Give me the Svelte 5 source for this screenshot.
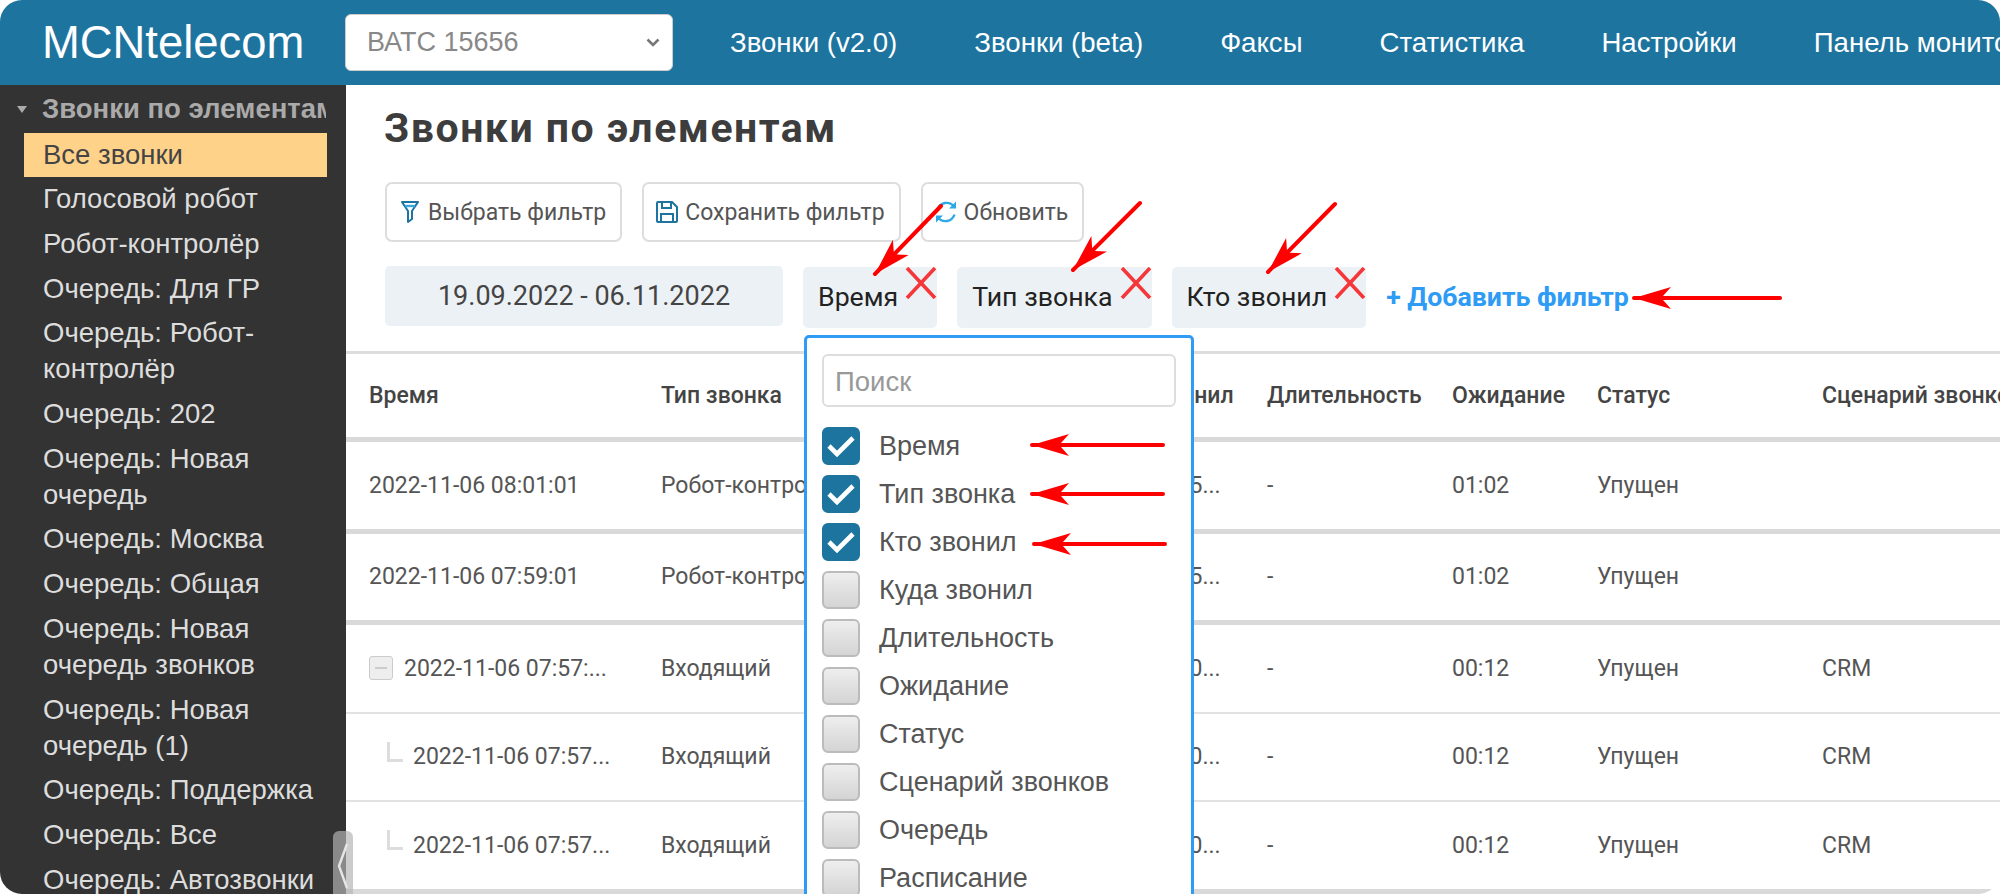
<script>
	const navItems = ['Звонки (v2.0)', 'Звонки (beta)', 'Факсы', 'Статистика', 'Настройки', 'Панель мониторинга'];

	const sideItems = [
		'Голосовой робот',
		'Робот-контролёр',
		'Очередь: Для ГР',
		'Очередь: Робот-контролёр',
		'Очередь: 202',
		'Очередь: Новая очередь',
		'Очередь: Москва',
		'Очередь: Общая',
		'Очередь: Новая очередь звонков',
		'Очередь: Новая очередь (1)',
		'Очередь: Поддержка',
		'Очередь: Все',
		'Очередь: Автозвонки'
	];

	const columns = ['Время', 'Тип звонка', 'Кто звонил', 'Куда звонил', 'Длительность', 'Ожидание', 'Статус', 'Сценарий звонков'];

	const rows = [
		{ time: '2022-11-06 08:01:01', type: 'Робот-контролёр', to: '74991105...', wait: '01:02', script: '', thick: true },
		{ time: '2022-11-06 07:59:01', type: 'Робот-контролёр', to: '74991105...', wait: '01:02', script: '', thick: true },
		{ time: '2022-11-06 07:57:...', type: 'Входящий', to: '74991100...', wait: '00:12', script: 'CRM', parent: true },
		{ time: '2022-11-06 07:57...', type: 'Входящий', to: '74991100...', wait: '00:12', script: 'CRM', child: true },
		{ time: '2022-11-06 07:57...', type: 'Входящий', to: '74991100...', wait: '00:12', script: 'CRM', child: true, thick: true }
	];

	const filterOptions = [
		{ label: 'Время', checked: true },
		{ label: 'Тип звонка', checked: true },
		{ label: 'Кто звонил', checked: true },
		{ label: 'Куда звонил' },
		{ label: 'Длительность' },
		{ label: 'Ожидание' },
		{ label: 'Статус' },
		{ label: 'Сценарий звонков' },
		{ label: 'Очередь' },
		{ label: 'Расписание' }
	];

	const chips = ['Время', 'Тип звонка', 'Кто звонил'];

	// annotation arrows, [tipX, tipY, tailX, tailY]
	const arrows = [
		[875, 274, 941, 206],
		[1073, 270, 1140, 203],
		[1268, 272, 1335, 204],
		[1634, 298, 1780, 298],
		[1032, 445, 1163, 445],
		[1032, 494, 1163, 494],
		[1034, 544, 1165, 544]
	];

	function headPoints(a) {
		const [x, y, tx, ty] = a;
		const len = Math.hypot(tx - x, ty - y);
		const ux = (tx - x) / len;
		const uy = (ty - y) / len;
		const px = -uy;
		const py = ux;
		const pt = (along, side) => `${x + ux * along + px * side},${y + uy * along + py * side}`;
		return [pt(0, 0), pt(37, 11), pt(29, 2), pt(29, -2), pt(37, -11)].join(' ');
	}
</script>

<div class="frame">
	<header class="topbar">
		<div class="logo">MCNtelecom</div>
		<div class="account">
			<span>ВАТС 15656</span>
			<svg width="14" height="9" viewBox="0 0 14 9"><path d="M1.5 1.5 7 7l5.5-5.5" fill="none" stroke="#777" stroke-width="2.6" /></svg>
		</div>
		<nav class="nav">
			{#each navItems as item}
				<span>{item}</span>
			{/each}
		</nav>
	</header>

	<div class="body">
		<aside class="sidebar">
			<div class="side-head"><span class="tri"></span><span class="side-title">Звонки по элементам</span></div>
			<div class="side-item active">Все звонки</div>
			{#each sideItems as item}
				<div class="side-item">{item}</div>
			{/each}
		</aside>

		<main class="content">
			<h1>Звонки по элементам</h1>

			<div class="toolbar">
				<button>
					<svg viewBox="0 0 24 24"><path d="M4 2h16l-6 9v8l-4 3V11z" fill="none" stroke="#1d749f" stroke-width="2" stroke-linejoin="round" /><path d="M7 6h10" stroke="#3ba6dc" stroke-width="2.4" /></svg>
					Выбрать фильтр
				</button>
				<button>
					<svg viewBox="0 0 24 24"><path d="M2 3a1 1 0 0 1 1-1h14l5 5v14a1 1 0 0 1-1 1H3a1 1 0 0 1-1-1z" fill="none" stroke="#1d749f" stroke-width="2" /><path d="M7 2v6h9V2M6 22v-8h12v8" fill="none" stroke="#1d749f" stroke-width="2" /></svg>
					Сохранить фильтр
				</button>
				<button>
					<svg viewBox="0 0 24 24"><path d="M20 6.500A9.500 9.500 0 0 0 3.500 9.500" fill="none" stroke="#2ea8e6" stroke-width="2.4" /><path d="M4 17.500a9.500 9.500 0 0 0 16.500-3" fill="none" stroke="#2ea8e6" stroke-width="2.4" /><path d="M22 1.500v7h-7zM2 22.500v-7h7z" fill="#2ea8e6" /></svg>
					Обновить
				</button>
			</div>

			<div class="filters">
				<div class="date">19.09.2022 - 06.11.2022</div>
				{#each chips as chip}
					<div class="chip">
						{chip}
						<svg class="close" width="32" height="32" viewBox="0 0 32 32"><path d="M2 1l28 30M30 1 2 31" stroke="#f5373a" stroke-width="3.6" /></svg>
					</div>
				{/each}
				<span class="add">+ Добавить фильтр</span>
			</div>

			<table class="calls">
				<colgroup>
					<col style="width:292px" /><col style="width:244px" /><col style="width:194px" /><col style="width:168px" /><col style="width:185px" /><col style="width:145px" /><col style="width:225px" /><col style="width:320px" />
				</colgroup>
				<thead>
					<tr class="thick">
						{#each columns as col}
							<th>{col}</th>
						{/each}
					</tr>
				</thead>
				<tbody>
					{#each rows as row}
						<tr class:thick={row.thick}>
							<td>
								<div class="time">
									{#if row.parent}<span class="toggle"></span>{/if}
									{#if row.child}<span class="branch"></span>{/if}
									{row.time}
								</div>
							</td>
							<td>{row.type}</td>
							<td></td>
							<td>{row.to}</td>
							<td>-</td>
							<td>{row.wait}</td>
							<td>Упущен</td>
							<td>{row.script}</td>
						</tr>
					{/each}
				</tbody>
			</table>

			<div class="dropdown">
				<div class="search">Поиск</div>
				{#each filterOptions as opt}
					<div class="option">
						<span class="box" class:checked={opt.checked}>
							{#if opt.checked}
								<svg width="28" height="24" viewBox="0 0 28 24"><path d="M2 12l8 8L26 4" fill="none" stroke="#fff" stroke-width="4.6" /></svg>
							{/if}
						</span>
						{opt.label}
					</div>
				{/each}
			</div>
		</main>
	</div>

	<div class="handle">
		<svg width="12" height="48" viewBox="0 0 12 48"><path d="M10 2 2 24l8 22" fill="none" stroke="#e6e6e6" stroke-width="2.4" /></svg>
	</div>

	<svg class="marks" width="2000" height="894" viewBox="0 0 2000 894">
		{#each arrows as a}
			<line x1={a[0]} y1={a[1]} x2={a[2]} y2={a[3]} stroke="#f00" stroke-width="4" stroke-linecap="round" />
			<polygon points={headPoints(a)} fill="#f00" />
		{/each}
	</svg>
</div>

<style>
	:global(body) {
		margin: 0;
		background: #fff;
	}

	.frame {
		position: relative;
		width: 2000px;
		height: 894px;
		overflow: hidden;
		border-radius: 22px;
		background: #fff;
		font-family: 'Liberation Sans', Arial, sans-serif;
	}

	.topbar {
		display: flex;
		align-items: center;
		height: 85px;
		background: #1d749f;
		color: #fff;
	}

	.logo {
		flex: none;
		width: 302px;
		padding-left: 42px;
		box-sizing: border-box;
		font-size: 45.4px;
		white-space: nowrap;
	}

	.account {
		flex: none;
		display: flex;
		align-items: center;
		justify-content: space-between;
		box-sizing: border-box;
		width: 328px;
		height: 57px;
		margin-left: 43px;
		padding: 0 12px 0 21px;
		background: #fff;
		border: 1px solid #ccc;
		border-radius: 6px;
		color: #888;
		font-size: 27px;
	}

	.nav {
		display: flex;
		gap: 77px;
		margin-left: 57px;
		font-size: 27.6px;
		white-space: nowrap;
	}

	.body {
		display: flex;
		height: 809px;
	}

	.sidebar {
		flex: none;
		width: 346px;
		box-sizing: border-box;
		padding: 0 19px 0 0;
		background: #333;
		color: #ddd;
		font-size: 27.5px;
		overflow: hidden;
	}

	.side-head {
		display: flex;
		align-items: center;
		height: 48px;
		padding-left: 17px;
		color: #aaa;
		font-weight: bold;
	}

	.tri {
		flex: none;
		width: 0;
		height: 0;
		margin-right: 15px;
		border-left: 5px solid transparent;
		border-right: 5px solid transparent;
		border-top: 7px solid #aaa;
	}

	.side-title {
		flex: none;
		width: 284px;
		overflow: hidden;
		white-space: nowrap;
	}

	.side-item {
		margin-left: 24px;
		padding: 4.35px 0 4.35px 19px;
		line-height: 36px;
	}

	.side-item.active {
		padding-top: 4px;
		padding-bottom: 4px;
		background: #ffd28a;
		color: #444;
	}

	.content {
		position: relative;
		flex: 1;
		min-width: 0;
		overflow: hidden;
	}

	h1 {
		margin: 0;
		padding: 20px 0 0 38px;
		height: 77px;
		box-sizing: border-box;
		color: #3d3d3d;
		font-family: Roboto, sans-serif;
		font-size: 41px;
		font-weight: 700;
		line-height: 46px;
		letter-spacing: 1.5px;
		white-space: nowrap;
	}

	.toolbar {
		display: flex;
		gap: 20px;
		padding: 20px 0 0 39px;
	}

	button {
		display: flex;
		align-items: center;
		gap: 6px;
		height: 60px;
		padding: 0 14px 0 11px;
		background: #fff;
		border: 2px solid #ddd;
		border-radius: 7px;
		color: #555;
		font-family: Roboto, sans-serif;
		font-size: 23px;
		white-space: nowrap;
	}

	button svg {
		flex: none;
		width: 24px;
		height: 24px;
	}

	.filters {
		display: flex;
		align-items: flex-start;
		gap: 20px;
		padding: 24px 0 0 39px;
	}

	.date {
		width: 398px;
		height: 60px;
		line-height: 60px;
		text-align: center;
		background: #ecf1f5;
		border-radius: 5px;
		color: #444;
		font-family: Roboto, sans-serif;
		font-size: 27px;
	}

	.chip {
		position: relative;
		height: 61px;
		margin-top: 1px;
		padding: 0 39px 0 15px;
		line-height: 61px;
		background: #ecf1f5;
		border-radius: 5px;
		color: #222;
		font-family: Roboto, sans-serif;
		font-size: 26.7px;
		white-space: nowrap;
	}

	.close {
		position: absolute;
		top: 0;
		right: 0;
	}

	.add {
		align-self: center;
		color: #2e9bf5;
		font-family: Roboto, sans-serif;
		font-size: 26.7px;
		font-weight: 700;
		white-space: nowrap;
	}

	.calls {
		table-layout: fixed;
		width: 1573px;
		margin-top: 23px;
		border-collapse: collapse;
		border-top: 3px solid #ddd;
		font-family: Roboto, sans-serif;
		font-size: 23px;
		color: #555;
	}

	th {
		height: 83px;
		padding: 0 0 0 23px;
		text-align: left;
		font-weight: 500;
		color: #444;
		white-space: nowrap;
		overflow: hidden;
	}

	td {
		height: 86.5px;
		padding: 0 0 0 23px;
		white-space: nowrap;
		overflow: hidden;
	}

	tr {
		border-bottom: 2px solid #e2e2e2;
	}

	tr.thick {
		border-bottom: 5px solid #d9d9d9;
	}

	.time {
		display: flex;
		align-items: center;
	}

	.toggle {
		position: relative;
		width: 24px;
		height: 24px;
		margin-right: 11px;
		box-sizing: border-box;
		background: #eee;
		border: 1px solid #ccc;
		border-radius: 3px;
	}

	.toggle::after {
		content: '';
		position: absolute;
		left: 5px;
		right: 5px;
		top: 10px;
		height: 2px;
		background: #ccc;
	}

	.branch {
		width: 16px;
		height: 20px;
		margin: -10px 10px 0 18px;
		border-left: 3px solid #ddd;
		border-bottom: 3px solid #ddd;
		box-sizing: border-box;
	}

	.dropdown {
		position: absolute;
		top: 250px;
		left: 458px;
		box-sizing: border-box;
		width: 390px;
		height: 600px;
		padding: 16px 15px 0;
		background: #fff;
		border: 3px solid #2e9bf5;
		border-radius: 5px;
	}

	.search {
		box-sizing: border-box;
		height: 53px;
		margin-bottom: 15px;
		padding-left: 11px;
		line-height: 51px;
		background: #fff;
		border: 2px solid #ddd;
		border-radius: 6px;
		color: #999;
		font-size: 27.5px;
	}

	.option {
		display: flex;
		align-items: center;
		gap: 19px;
		height: 48px;
		color: #555;
		font-size: 27px;
	}

	.box {
		display: flex;
		align-items: center;
		justify-content: center;
		box-sizing: border-box;
		flex: none;
		width: 38px;
		height: 38px;
		background: linear-gradient(#eee, #d4d4d4);
		border: 2px solid #bbb;
		border-radius: 6px;
	}

	.box.checked {
		background: #1d749f;
		border-color: #1d749f;
	}

	.handle {
		position: absolute;
		left: 333px;
		top: 831px;
		display: flex;
		align-items: center;
		justify-content: center;
		width: 20px;
		height: 70px;
		background: rgba(180, 180, 180, 0.68);
		border-radius: 6px 6px 0 0;
	}

	.marks {
		position: absolute;
		left: 0;
		top: 0;
		pointer-events: none;
	}
</style>
